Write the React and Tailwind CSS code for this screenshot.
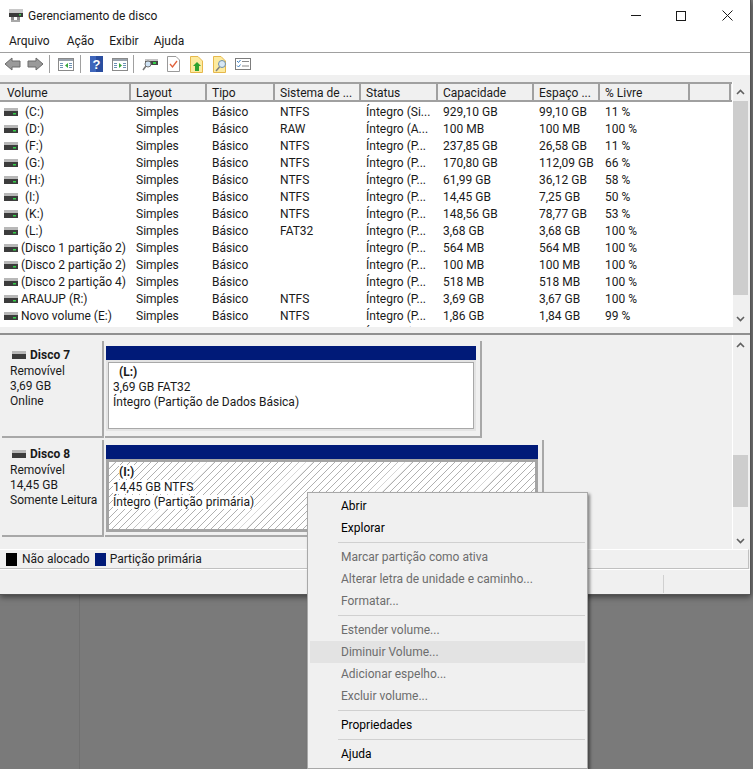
import React from "react";

const volumes = [
  ["(C:)", "NTFS", "Íntegro (Si...", "929,10 GB", "99,10 GB", "11 %"],
  ["(D:)", "RAW", "Íntegro (A...", "100 MB", "100 MB", "100 %"],
  ["(F:)", "NTFS", "Íntegro (P...", "237,85 GB", "26,58 GB", "11 %"],
  ["(G:)", "NTFS", "Íntegro (P...", "170,80 GB", "112,09 GB", "66 %"],
  ["(H:)", "NTFS", "Íntegro (P...", "61,99 GB", "36,12 GB", "58 %"],
  ["(I:)", "NTFS", "Íntegro (P...", "14,45 GB", "7,25 GB", "50 %"],
  ["(K:)", "NTFS", "Íntegro (P...", "148,56 GB", "78,77 GB", "53 %"],
  ["(L:)", "FAT32", "Íntegro (P...", "3,68 GB", "3,68 GB", "100 %"],
  ["(Disco 1 partição 2)", "", "Íntegro (P...", "564 MB", "564 MB", "100 %"],
  ["(Disco 2 partição 2)", "", "Íntegro (P...", "100 MB", "100 MB", "100 %"],
  ["(Disco 2 partição 4)", "", "Íntegro (P...", "518 MB", "518 MB", "100 %"],
  ["ARAUJP (R:)", "NTFS", "Íntegro (P...", "3,69 GB", "3,67 GB", "100 %"],
  ["Novo volume (E:)", "NTFS", "Íntegro (P...", "1,86 GB", "1,84 GB", "99 %"],
];

const headers = [
  ["Volume", "w-[129px]"],
  ["Layout", "w-[76px]"],
  ["Tipo", "w-[68px]"],
  ["Sistema de ...", "w-[86px]"],
  ["Status", "w-[77px]"],
  ["Capacidade", "w-[96px]"],
  ["Espaço ...", "w-[66px]"],
  ["% Livre", "w-[90px]"],
  ["", "w-[41px]"],
];

// Small drive icon used in the list and the disk labels
function DriveIcon({ led = true }) {
  return (
    <svg width="14" height="8" viewBox="0 0 14 8">
      <rect x="0" y="0" width="14" height="3" fill="#b8b8b8" />
      <rect x="0" y="3" width="14" height="5" fill="#3c3c3c" />
      {led && <rect x="9" y="5" width="3" height="1.5" fill="#35d04a" />}
    </svg>
  );
}

function ArrowIcon({ flip }) {
  return (
    <svg width="17" height="16" viewBox="0 0 17 16" className={flip ? "-scale-x-100" : ""}>
      <path d="M1 8 L8 2 V5 H16 V11 H8 V14 Z" fill="#9a9a9a" stroke="#6a6a6a" strokeWidth="1" />
    </svg>
  );
}

function PaneIcon({ arrowFlip, color }) {
  return (
    <svg width="16" height="13" viewBox="0 0 16 13">
      <rect x="0.5" y="0.5" width="15" height="12" fill="#fff" stroke="#8a8a8a" />
      <rect x="1" y="1" width="14" height="2" fill="#9aa3ad" />
      <rect x="2" y="5" width="3" height="1" fill="#6d92b5" />
      <rect x="2" y="7" width="3" height="1" fill="#6d92b5" />
      <rect x="2" y="9" width="3" height="1" fill="#6d92b5" />
      <rect x="11" y="5" width="3" height="1" fill="#6d92b5" />
      <rect x="11" y="7" width="3" height="1" fill="#6d92b5" />
      <rect x="11" y="9" width="3" height="1" fill="#6d92b5" />
      <path d={arrowFlip ? "M7 5 L10 7.5 L7 10 Z" : "M10 5 L7 7.5 L10 10 Z"} fill={color} />
    </svg>
  );
}

function Separator() {
  return <div className="w-px h-[18px] bg-[#a0a0a0]" />;
}

function Toolbar() {
  return (
    <div className="h-[22px] bg-white flex items-center pl-[4px]">
      <ArrowIcon />
      <div className="w-[6px]" />
      <ArrowIcon flip />
      <div className="w-[5px]" />
      <Separator />
      <div className="w-[8px]" />
      <PaneIcon color="#37a63b" />
      <div className="w-[6px]" />
      <Separator />
      <div className="w-[9px]" />
      <svg width="13" height="16" viewBox="0 0 13 16">
        <rect width="13" height="16" fill="#2a4ea0" />
        <rect x="0" y="0" width="6" height="16" fill="#3f66bb" />
        <text x="6.5" y="13" textAnchor="middle" fontSize="13" fontWeight="700" fill="#fff" fontFamily="Liberation Sans">?</text>
      </svg>
      <div className="w-[9px]" />
      <PaneIcon arrowFlip color="#37a63b" />
      <div className="w-[5px]" />
      <Separator />
      <div className="w-[8px]" />
      <svg width="16" height="14" viewBox="0 0 16 14">
        <rect x="3" y="2" width="13" height="6" fill="#c4c4c4" />
        <rect x="3" y="4" width="13" height="4" fill="#444" />
        <rect x="11" y="5" width="3" height="2" fill="#35d04a" />
        <circle cx="6" cy="7" r="3" fill="#cfe3f5" stroke="#707070" />
        <path d="M4 9 L1 13" stroke="#777" strokeWidth="1.5" />
      </svg>
      <div className="w-[9px]" />
      <svg width="13" height="16" viewBox="0 0 13 16">
        <path d="M0.5 0.5 H9 L12.5 4 V15.5 H0.5 Z" fill="#fff" stroke="#9a9a9a" />
        <path d="M3 8 L5.5 11 L10 5" fill="none" stroke="#e0603a" strokeWidth="1.3" />
      </svg>
      <div className="w-[10px]" />
      <svg width="13" height="17" viewBox="0 0 13 17">
        <path d="M0.5 0.5 H8 L12.5 5 V16.5 H0.5 Z" fill="#fdeb9f" stroke="#e6b84c" />
        <path d="M7 6 L11 10 H9 V15 H5 V10 H3 Z" fill="#2fa32f" />
      </svg>
      <div className="w-[10px]" />
      <svg width="14" height="17" viewBox="0 0 14 17">
        <path d="M0.5 0.5 H8 L12.5 5 V16.5 H0.5 Z" fill="#fdeb9f" stroke="#e6b84c" />
        <circle cx="9" cy="8" r="3.5" fill="#d8e8f5" stroke="#6f8fa8" />
        <path d="M6.5 11 L3 15" stroke="#7f7f7f" strokeWidth="1.5" />
      </svg>
      <div className="w-[8px]" />
      <svg width="16" height="12" viewBox="0 0 16 12">
        <rect x="0.5" y="0.5" width="15" height="11" fill="#fff" stroke="#7d7d7d" />
        <path d="M2 3 L3.5 4.5 L5.5 2" fill="none" stroke="#3b7fc4" />
        <path d="M2 7.5 L3.5 9 L5.5 6.5" fill="none" stroke="#3b7fc4" />
        <rect x="7" y="3" width="7" height="1" fill="#8a8a8a" />
        <rect x="7" y="7.5" width="7" height="1" fill="#8a8a8a" />
      </svg>
    </div>
  );
}

function TitleBar() {
  return (
    <div className="h-[30px] bg-white flex items-center pl-[8px] pt-[1px]">
      <svg width="15" height="15" viewBox="0 0 15 15">
        <rect x="1" y="1" width="14" height="4" fill="#c8c8c8" />
        <rect x="1" y="5" width="14" height="4" fill="#3a3a3a" />
        <rect x="11" y="6" width="2" height="1.5" fill="#35d04a" />
        <path d="M3 9 H6 V14 H3 Z M9 9 H12 V14 H9 Z" fill="#8d8d8d" />
        <rect x="3" y="12" width="9" height="2" fill="#a8a8a8" />
      </svg>
      <span className="ml-[5px] text-[#1a1a1a]">Gerenciamento de disco</span>
      <div className="ml-auto flex items-center pr-[17px]">
        <div className="w-[10px] h-px bg-[#1a1a1a]" />
        <div className="w-[10px] h-[10px] border border-[#1a1a1a] ml-[35px]" />
        <svg width="11" height="11" viewBox="0 0 11 11" className="ml-[36px]">
          <path d="M0.5 0.5 L10.5 10.5 M10.5 0.5 L0.5 10.5" stroke="#1a1a1a" />
        </svg>
      </div>
    </div>
  );
}

function MenuBar() {
  return (
    <div className="h-[23px] bg-white border-b border-[#a0a0a0] flex items-center pl-[9px] pb-[1px] gap-[15px] text-[#1a1a1a]">
      <span className="mr-[2px]">Arquivo</span>
      <span>Ação</span>
      <span>Exibir</span>
      <span>Ajuda</span>
    </div>
  );
}

function Row({ icon = true, name, fs, status, cap, free, pct }) {
  return (
    <div className="h-[17px] flex items-center pl-[2px] text-[#1a1a1a] whitespace-nowrap">
      <div className="w-[129px] flex items-center pl-[2px] gap-[3px]">
        {icon && <DriveIcon />}
        <span className={name && name.length <= 4 ? "pl-[4px]" : ""}>{name}</span>
      </div>
      <div className="w-[76px] pl-[5px]">{name && "Simples"}</div>
      <div className="w-[68px] pl-[5px]">{name && "Básico"}</div>
      <div className="w-[86px] pl-[5px]">{fs}</div>
      <div className="w-[77px] pl-[5px]">{status}</div>
      <div className="w-[96px] pl-[5px]">{cap}</div>
      <div className="w-[66px] pl-[5px]">{free}</div>
      <div className="w-[90px] pl-[5px]">{pct}</div>
    </div>
  );
}

function Chevron({ down }) {
  return (
    <svg width="9" height="6" viewBox="0 0 9 6" className={down ? "rotate-180" : ""}>
      <path d="M1 5 L4.5 1.5 L8 5" fill="none" stroke="#606060" strokeWidth="1.6" />
    </svg>
  );
}

function Scrollbar({ topSpace, thumb }) {
  return (
    <div className="w-[15px] flex flex-col bg-[#f0f0f0] box-content border-l border-white">
      <div className="h-[19px] flex items-center justify-center shrink-0">
        <Chevron />
      </div>
      <div className="flex-1 flex flex-col">
        <div className={topSpace} />
        <div className={`${thumb} bg-[#cdcdcd]`} />
      </div>
      <div className="h-[17px] flex items-center justify-center shrink-0">
        <Chevron down />
      </div>
    </div>
  );
}

function VolumeList() {
  return (
    <div className="h-[253px] border-b-2 border-[#909090]">
      <div className="flex h-[245px]">
        <div className="w-[732px] flex flex-col">
          <div className="h-[20px] shrink-0 flex border-t-2 border-b-2 border-[#a0a0a0] pl-[2px] bg-[#f0f0f0] text-[#1a1a1a]">
            {headers.map(([label, w]) => (
              <div key={label} className={`${w} pl-[5px] border-r-2 border-[#a0a0a0] leading-[19px] whitespace-nowrap`}>
                {label}
              </div>
            ))}
          </div>
          <div className="flex-1 bg-white overflow-hidden pt-[1px]">
            {volumes.map((v) => (
              <Row key={v[0]} name={v[0]} fs={v[1]} status={v[2]} cap={v[3]} free={v[4]} pct={v[5]} />
            ))}
            <Row icon={false} status="Íntegro (P..." />
          </div>
        </div>
        <Scrollbar topSpace="h-0" thumb="h-[194px]" />
      </div>
    </div>
  );
}

function DiskLabel({ name, lines }) {
  return (
    <div className="w-[102px] h-[97px] bg-[#f0f0f0] border-b-2 border-r-2 border-[#a8a8a8] shrink-0 pl-[8px] pt-[5px] leading-[15px] text-[#1a1a1a] whitespace-nowrap">
      <div className="flex items-center font-bold h-[18px]">
        <div className="ml-[2px] mr-[4px] flex">
          <DriveIcon led={false} />
        </div>
        {name}
      </div>
      {lines.map((l) => (
        <div key={l}>{l}</div>
      ))}
    </div>
  );
}

function PartitionText({ letter, size, state }) {
  return (
    <div className="pl-[4px] pt-[3px] leading-[15px] text-[#1a1a1a] whitespace-nowrap">
      <div className="pl-[6px] font-bold">
        <span className="bg-white">{letter}</span>
      </div>
      <div>
        <span className="bg-white">{size}</span>
      </div>
      <div>
        <span className="bg-white">{state}</span>
      </div>
    </div>
  );
}

function DiskPane() {
  return (
    <div className="flex h-[214px]">
      <div className="w-[732px] pt-[6px] pl-[2px] flex flex-col gap-[2px]">
        <div className="flex">
          <DiskLabel name="Disco 7" lines={["Removível", "3,69 GB", "Online"]} />
          <div className="w-[377px] h-[97px] border-r-2 border-b-2 border-[#a8a8a8] pl-[1px] pt-[5px] pr-[4px] ml-[1px]">
            <div className="h-[14px] bg-[#001a78]" />
            <div className="h-[71px] border-[3px] border-t-2 border-[#e3e3e3] outline outline-[#a8a8a8] -outline-offset-[3px] bg-white">
              <PartitionText letter="(L:)" size="3,69 GB FAT32" state="Íntegro (Partição de Dados Básica)" />
            </div>
          </div>
        </div>
        <div className="flex">
          <DiskLabel name="Disco 8" lines={["Removível", "14,45 GB", "Somente Leitura"]} />
          <div className="w-[439px] h-[97px] border-r-2 border-b-2 border-[#a8a8a8] pl-[1px] pt-[5px] pr-[4px] ml-[1px]">
            <div className="h-[14px] bg-[#001a78]" />
            <div className="h-[73px] border-[3px] border-[#a4a4a4] bg-white bg-[repeating-linear-gradient(135deg,#ffffff_0px,#ffffff_4.2px,#b0b0b0_4.4px,#b0b0b0_5px)]">
              <PartitionText letter="(I:)" size="14,45 GB NTFS" state="Íntegro (Partição primária)" />
            </div>
          </div>
        </div>
      </div>
      <Scrollbar topSpace="h-[101px]" thumb="h-[52px]" />
    </div>
  );
}

function Legend() {
  return (
    <div className="h-[20px] w-[749px] border-t border-b border-r border-[#c0c0c0] border-t-white flex items-center pl-[6px] text-[#1a1a1a]">
      <div className="w-[11px] h-[13px] bg-black" />
      <span className="ml-[5px]">Não alocado</span>
      <div className="w-[11px] h-[13px] bg-[#001a78] ml-[5px]" />
      <span className="ml-[4px]">Partição primária</span>
    </div>
  );
}

function StatusBar() {
  return (
    <div className="flex-1 flex justify-end pt-[5px] pb-[1px] border-t border-white">
      <div className="w-[87px] border-l border-[#d0d0d0]" />
    </div>
  );
}

function ContextMenu() {
  const Item = ({ label, disabled, active }) => (
    <div className={`h-[22px] leading-[23px] pl-[31px] ${disabled ? "text-[#6d6d6d]" : "text-black"} ${active ? "bg-[#e3e3e3]" : ""}`}>
      {label}
    </div>
  );
  const Sep = () => (
    <div className="h-[7px] pl-[28px] flex items-center">
      <div className="h-px w-full bg-[#d0d0d0]" />
    </div>
  );
  return (
    <div className="absolute left-[307px] top-[492px] w-[281px] h-[277px] bg-[#f0f0f0] border border-[#a8a8a8] p-[2px] shadow-[2px_2px_3px_rgba(0,0,0,0.45)]">
      <Item label="Abrir" />
      <Item label="Explorar" />
      <Sep />
      <Item label="Marcar partição como ativa" disabled />
      <Item label="Alterar letra de unidade e caminho..." disabled />
      <Item label="Formatar..." disabled />
      <Sep />
      <Item label="Estender volume..." disabled />
      <Item label="Diminuir Volume..." disabled active />
      <Item label="Adicionar espelho..." disabled />
      <Item label="Excluir volume..." disabled />
      <Sep />
      <Item label="Propriedades" />
      <Sep />
      <Item label="Ajuda" />
    </div>
  );
}

export default function App() {
  return (
    <div className="relative w-[753px] h-[769px] overflow-hidden bg-[#7a7a7a] text-[12px] font-['Roboto',sans-serif]">
      <div className="absolute left-[79px] top-[595px] bottom-0 w-px bg-[#707070]" />
      <div className="w-[751px] h-[595px] flex flex-col bg-[#f0f0f0] border-r border-b border-[#555555] shadow-[0_2px_6px_rgba(0,0,0,0.5)] relative">
        <TitleBar />
        <MenuBar />
        <Toolbar />
        <div className="h-[7px]" />
        <VolumeList />
        <DiskPane />
        <Legend />
        <StatusBar />
      </div>
      <ContextMenu />
    </div>
  );
}
